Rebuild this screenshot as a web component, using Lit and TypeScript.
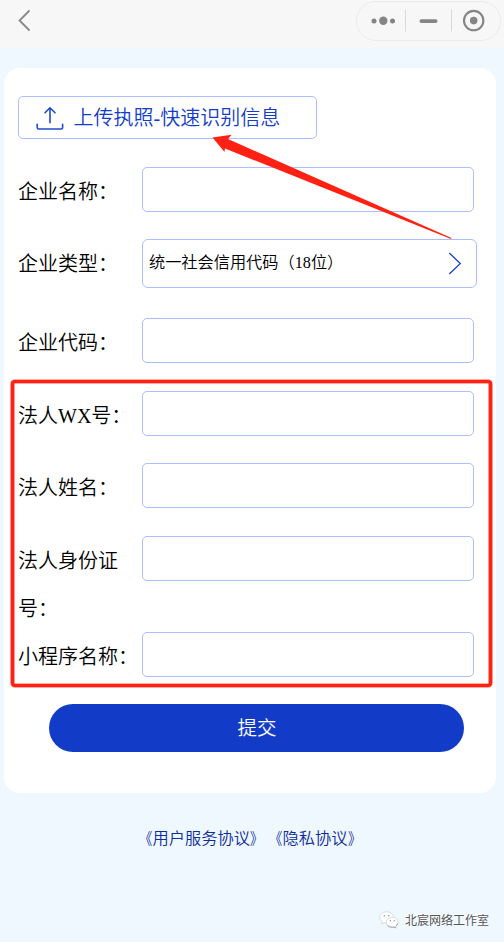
import { LitElement, html, css, svg } from "lit";
import { customElement, property } from "lit/decorators.js";

const FORM_FONT = css`"Liberation Serif", "Noto Sans CJK SC", sans-serif`;

// Latin letters, digits and the hyphen keep the regular serif weight beside the lighter Chinese text.
const mixed = (text: string) =>
  text.split(/([A-Za-z0-9-]+)/).map((part, i) => (i % 2 ? html`<span class="latin">${part}</span>` : part));

const inlineText = css`.latin { font-weight: 400; }`;

@customElement("nav-bar")
class NavBar extends LitElement {
  static styles = css`
    :host { display: flex; height: 48px; box-sizing: border-box; background: #f7f7f7; justify-content: space-between; padding: 0 3px 0 17px; }
    .back { width: 16px; height: 24px; margin-top: 9px; }
    .capsule { display: flex; align-items: center; width: 145px; height: 40px; margin-top: 1px; box-sizing: border-box; border: 1px solid #ebebeb; border-radius: 20px; }
    .capsule svg { flex: 1; height: 38px; display: block; }
  `;
  render() {
    return html`
      <svg class="back" viewBox="0 0 16 24"><path d="M12.5 1.5 2.5 11.5 12.5 21.5" fill="none" stroke="#888" stroke-width="1.8" /></svg>
      <div class="capsule">
        <svg viewBox="0 0 143 38">
          <g fill="#858585">
            <circle cx="17" cy="19" r="2.5" /><circle cx="26.3" cy="18.8" r="4.2" /><circle cx="35.5" cy="19" r="2.5" />
            <rect x="62.5" y="17.2" width="18" height="3.8" rx="1.9" />
            <circle cx="116.7" cy="18.6" r="3.8" />
          </g>
          <circle cx="116.7" cy="18.6" r="9.7" fill="none" stroke="#858585" stroke-width="2.1" />
          <path d="M48.5 7.5v22M94.5 7.5v22" stroke="#dadada" stroke-width="1" />
        </svg>
      </div>`;
  }
}

@customElement("form-row")
class FormRow extends LitElement {
  @property() label = "";
  @property() value = "";
  static styles = [inlineText, css`
    :host { display: grid; grid-template-columns: 124px 1fr; align-items: start; }
    .label { font: 350 20px/48px ${FORM_FONT}; color: #000; margin: 1px 0 -1px; }
    .field { box-sizing: border-box; width: 332px; height: 45px; border: 1px solid #abbfff; border-radius: 5px; background: #fff; }
    .select { width: 335px; height: 49px; display: flex; align-items: center; justify-content: space-between; padding: 0 14px 0 6px; border-radius: 6px; }
    .text { font: 350 16.2px/47px ${FORM_FONT}; color: #000; height: 47px; white-space: nowrap; }
    .arrow { width: 14px; height: 24px; }
  `];
  render() {
    return html`
      <div class="label">${mixed(this.label)}</div>
      ${this.value
        ? html`<div class="field select">
            <span class="text">${mixed(this.value)}</span>
            <svg class="arrow" viewBox="0 0 14 24"><path d="M1.3 1 12.3 11.5 1.3 22" fill="none" stroke="#1a42cc" stroke-width="1.3" /></svg>
          </div>`
        : html`<div class="field"></div>`}`;
  }
}

@customElement("app-root")
class AppRoot extends LitElement {
  static styles = [inlineText, css`
    :host { display: block; position: relative; width: 504px; height: 942px; overflow: hidden; background: #eff7ff; }
    .card { box-sizing: border-box; margin: 20px 8px 0 4px; height: 725px; padding: 28px 14px 0; border-radius: 16px; background: #fff; }
    .upload { display: flex; align-items: center; box-sizing: border-box; width: 299px; height: 43px; padding-left: 17px; gap: 9.5px; border: 1px solid #abbfff; border-radius: 5px; font: 350 20px/42px ${FORM_FONT}; color: #133dc8; white-space: nowrap; }
    .upload svg { width: 28px; height: 25px; margin-top: 2px; }
    .fields { display: flex; flex-direction: column; margin-top: 28px; }
    .gap-s { margin-bottom: 24px; }
    .gap-m { margin-bottom: 25px; }
    .gap-l { margin-bottom: 30px; }
    .submit { margin: 24px 18px 0 31px; height: 48px; padding-left: 1px; box-sizing: border-box; border-radius: 24px; background: #123cc8; color: #fff; text-align: center; font: 350 19.5px/49px ${FORM_FONT}; }
    .links { display: flex; justify-content: center; margin-top: 34px; padding-right: 4px; font: 350 16.25px/24px ${FORM_FONT}; color: #0c2e9c; white-space: nowrap; }
    .credit { display: flex; align-items: center; justify-content: flex-end; gap: 6px; margin-top: 57px; padding-right: 15px; font: 400 12px/24px "Noto Sans CJK SC", sans-serif; color: #555; text-shadow: -1px -1px 0 #fff; }
    .credit svg { width: 20px; height: 18px; }
    .open, .close { display: inline-block; transform: scaleX(.8); transform-origin: right; }
    .close { transform-origin: left; }
    .marks { position: absolute; left: 0; top: 0; width: 504px; height: 942px; pointer-events: none; }
  `];

  private rows = [
    { label: "企业名称\uff1a", gap: "gap-s" },
    { label: "企业类型\uff1a", value: "统一社会信用代码\uff0818位\uff09", gap: "gap-l" },
    { label: "企业代码\uff1a", gap: "gap-m" },
    { label: "法人WX号\uff1a", gap: "gap-s" },
    { label: "法人姓名\uff1a", gap: "gap-m" },
    { label: "法人身份证号\uff1a", gap: "" },
    { label: "小程序名称\uff1a", gap: "" },
  ];

  private marks() {
    return svg`
      <path d="M212.5 137.5 231.5 134.8 228 139 451.5 238 451 239 225 148.5 224.5 152Z" fill="#ff2214" />
      <rect x="12.5" y="381.5" width="478" height="304" rx="2.5" fill="none" stroke="#ff9088" stroke-width="4.6" />
      <rect x="12.5" y="381.5" width="478" height="304" rx="2.5" fill="none" stroke="#ff2214" stroke-width="3.2" />`;
  }

  private link(title: string) {
    return html`<span><span class="open">《</span>${title}<span class="close">》</span></span>`;
  }

  render() {
    return html`
      <nav-bar></nav-bar>
      <main class="card">
        <div class="upload">
          <svg viewBox="0 0 28 25" fill="none" stroke="#2049cc" stroke-width="1.6" stroke-linecap="round" stroke-linejoin="round">
            <path d="M14 16.8V2.2M9 6.8 14 1.8 19 6.8" />
            <path d="M1.2 18.3V21.5Q1.2 23 2.7 23H25.1Q26.6 23 26.6 21.5V18.3" />
          </svg>
          <span>${mixed("上传执照-快速识别信息")}</span>
        </div>
        <div class="fields">
          ${this.rows.map((r) => html`<form-row class=${r.gap} .label=${r.label} .value=${r.value ?? ""}></form-row>`)}
        </div>
        <div class="submit">提交</div>
      </main>
      <div class="links">${this.link("用户服务协议")}${this.link("隐私协议")}</div>
      <div class="credit">
        <svg viewBox="0 0 20 18" fill="#fff" stroke="#c4c9d0" stroke-width=".6">
          <path d="M7.5.8C3.6.8.7 3.3.7 6.4c0 1.8.9 3.3 2.5 4.3L2.5 13l2.7-1.4c4.8 1.1 9.3-1.2 9.3-5.2C14.5 3.3 11.4.8 7.5.8Z" />
          <path d="M13.3 6.3c-3.3 0-5.9 2.1-5.9 4.9 0 3.3 3.7 5.5 7.6 4.6l2.2 1.2-.5-2c1.5-1 2.4-2.3 2.4-3.8 0-2.8-2.6-4.9-5.8-4.9Z" />
          <path d="M8.5 14.4c2 2 4.7 2.2 6.7 1.7l1.8.9M18.9 12.5c-.3 1-1.1 1.9-2.1 2.5" fill="none" stroke="#8f949b" stroke-width=".8" />
          <g fill="#8f949b" stroke="none"><circle cx="5.3" cy="4.8" r=".8" /><circle cx="9.8" cy="4.8" r=".8" /><circle cx="11.4" cy="9.8" r=".7" /><circle cx="15.2" cy="9.8" r=".7" /></g>
        </svg>
        <span>北宸网络工作室</span>
      </div>
      <svg class="marks" viewBox="0 0 504 942">${this.marks()}</svg>`;
  }
}
